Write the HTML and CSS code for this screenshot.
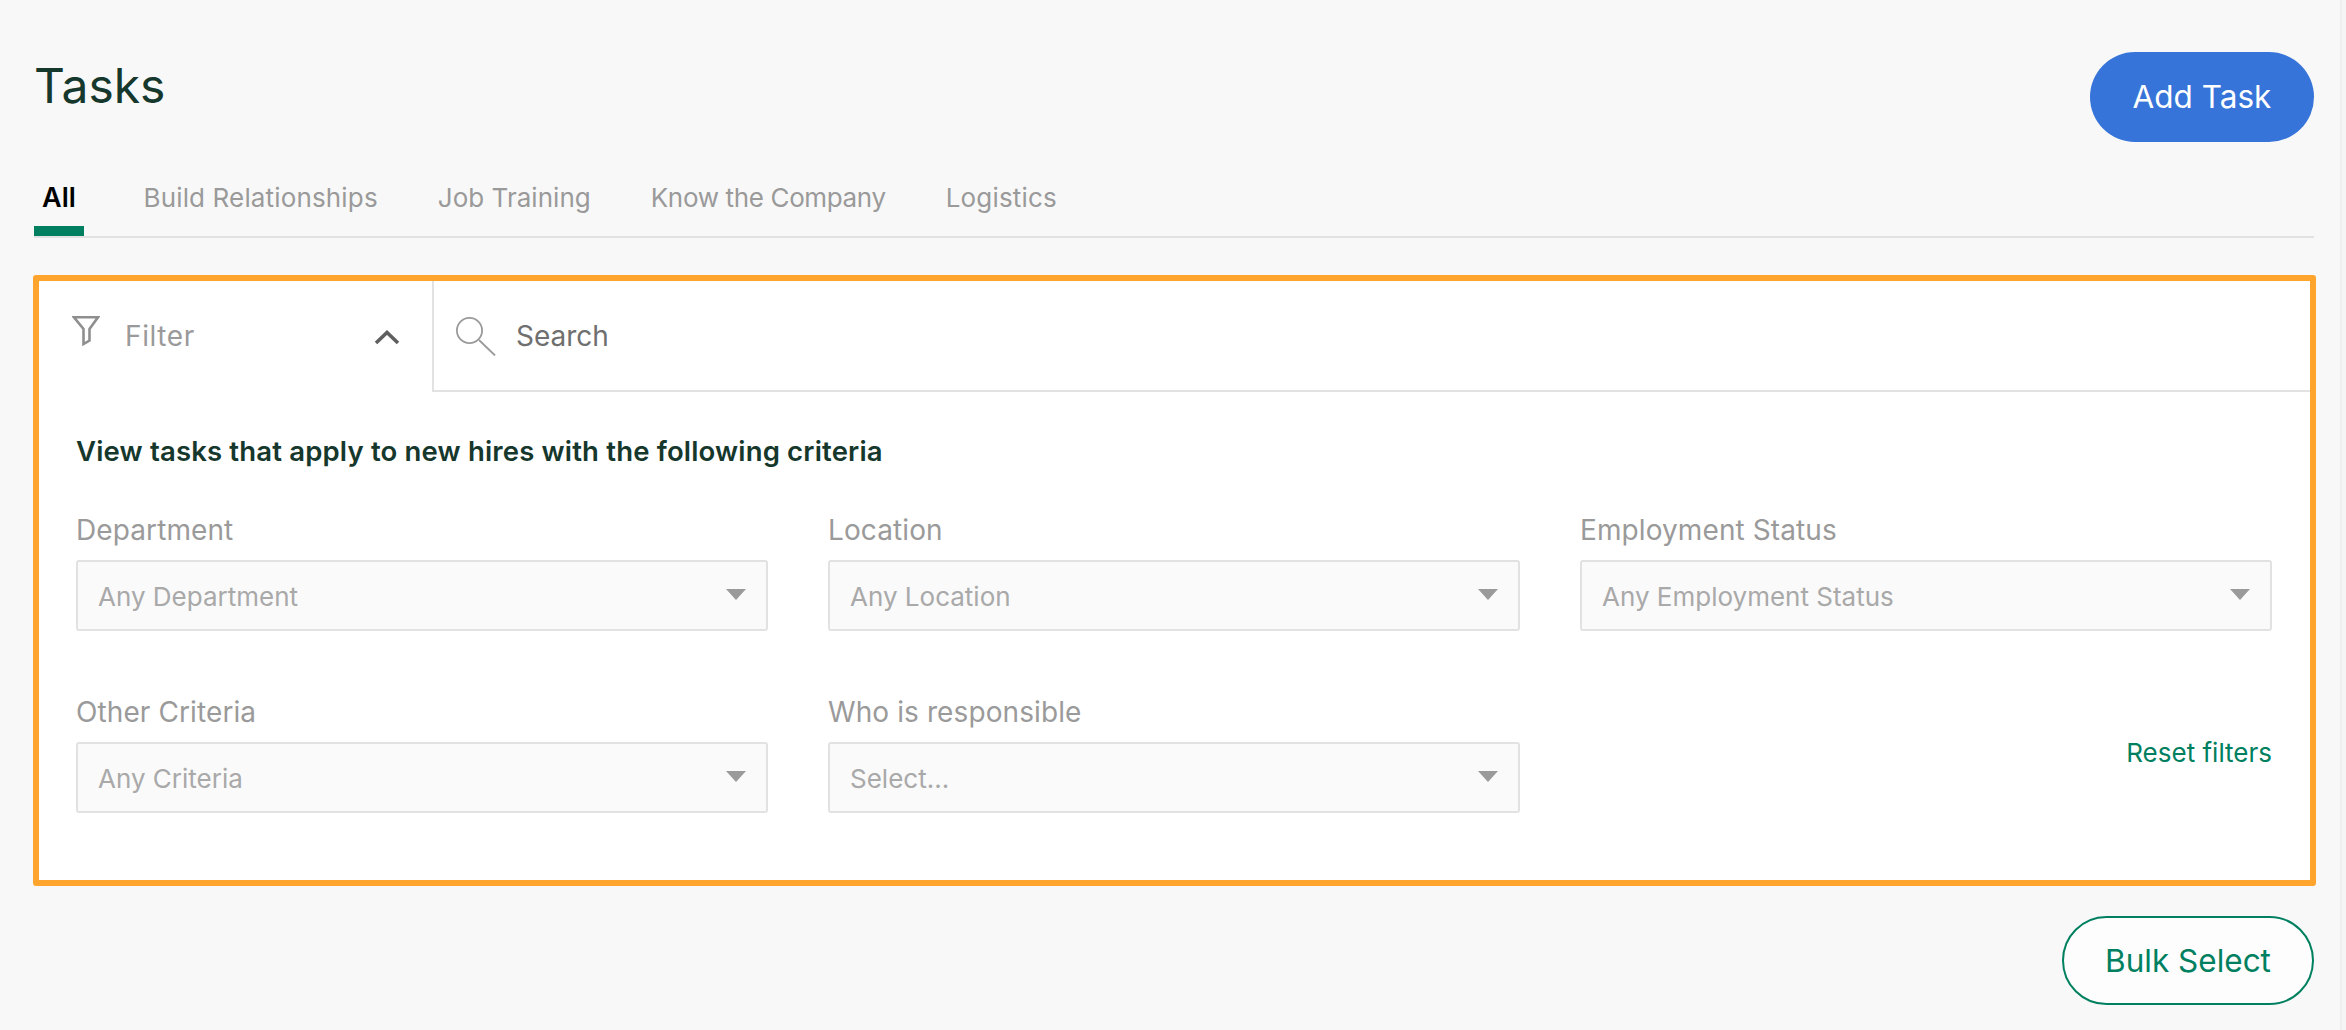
FILE: index.html
```html
<!DOCTYPE html>
<html lang="en">
<head>
<meta charset="utf-8">
<title>Tasks</title>
<link rel="stylesheet" href="styles.css">
</head>
<body>
<main class="page">
  <header class="header">
    <h1 class="title">Tasks</h1>
    <button class="btn btn-primary">Add Task</button>
  </header>
  <nav class="tabs">
    <a class="tab tab-active">All</a>
    <a class="tab">Build Relationships</a>
    <a class="tab tab-narrow">Job Training</a>
    <a class="tab tab-narrower">Know the Company</a>
    <a class="tab">Logistics</a>
  </nav>
  <section class="panel">
    <div class="toolbar">
      <div class="filter">
        <svg class="filter-icon" width="28" height="31" viewBox="0 0 28 31" fill="none" stroke="#8f8f8f" stroke-width="2.6"><path d="M2 2.3H26L17.5 14V25.5L11.5 29V14Z"/></svg>
        <span class="filter-label">Filter</span>
        <svg class="chevron" width="26" height="16" viewBox="0 0 26 16" fill="none" stroke="#5f5f5f" stroke-width="3.6"><path d="M2 14L13 3.5L24 14"/></svg>
      </div>
      <div class="search">
        <svg class="search-icon" width="40" height="39" viewBox="0 0 40 39" fill="none" stroke="#9a9a9a" stroke-width="1.8"><circle cx="13.5" cy="13.5" r="12.6"/><path d="M23 23L39 38.5"/></svg>
        <span class="search-label">Search</span>
      </div>
    </div>
    <div class="criteria">
      <h2 class="criteria-title">View tasks that apply to new hires with the following criteria</h2>
      <div class="grid">
        <div class="field">
          <label class="field-label">Department</label>
          <div class="select"><span>Any Department</span><i class="caret"></i></div>
        </div>
        <div class="field">
          <label class="field-label">Location</label>
          <div class="select"><span>Any Location</span><i class="caret"></i></div>
        </div>
        <div class="field">
          <label class="field-label">Employment Status</label>
          <div class="select"><span>Any Employment Status</span><i class="caret"></i></div>
        </div>
        <div class="field">
          <label class="field-label">Other Criteria</label>
          <div class="select"><span>Any Criteria</span><i class="caret"></i></div>
        </div>
        <div class="field">
          <label class="field-label">Who is responsible</label>
          <div class="select"><span>Select...</span><i class="caret"></i></div>
        </div>
        <div class="reset-cell"><a class="reset">Reset filters</a></div>
      </div>
    </div>
  </section>
  <div class="actions">
    <button class="btn btn-outline">Bulk Select</button>
  </div>
</main>
</body>
</html>
```
FILE: styles.css
```css
* { box-sizing: border-box; }
html, body { margin: 0; height: 100%; }
body {
  background: #f8f8f8;
  font-family: "Inter", "Liberation Sans", sans-serif;
  overflow: hidden;
}
body::after {
  content: "";
  position: fixed; top: 0; right: 0; bottom: 0;
  width: 4px;
  background: #f5f5f5;
  border-left: 2px solid #efefef;
}
.page { padding: 52px 32px 0 34px; }
.header { display: flex; justify-content: space-between; align-items: flex-start; height: 90px; }
.title { margin: 0; font-size: 48px; line-height: 68px; font-weight: 400; color: #15372c; }
.btn { font-family: inherit; border-radius: 45px; cursor: pointer; }
.btn-primary {
  width: 224px; height: 90px; border: 0; padding-bottom: 2px;
  background: #3674d9; color: #fff; font-size: 31.5px;
}
.tabs { display: flex; height: 96px; padding-top: 38px; border-bottom: 2px solid #e2e2e2; }
.tab {
  height: 56px; padding: 0 8px; margin-right: 44px;
  font-size: 26px; letter-spacing: 0.15px; line-height: 36px; color: #9a9a9a;
}
.tab-narrow { letter-spacing: 0.03px; }
.tab-narrower { letter-spacing: -0.35px; }
.tab-active { color: #000; font-weight: 600; font-size: 27px; letter-spacing: 0; border-bottom: 10px solid #008060; margin-right: 51.5px; min-width: 50px; }
.panel {
  margin: 37px -2px 0 -1px;
  height: 611px;
  border: 6px solid #ffa52e;
  border-radius: 3px;
  background: #fff;
}
.toolbar { display: flex; height: 111px; }
.filter { width: 393px; display: flex; align-items: flex-start; padding: 34px 32px 0 33px; }
.filter-icon { flex: none; }
.filter-label { margin: 3px 0 0 25px; font-size: 28px; letter-spacing: 0.6px; line-height: 36px; color: #9a9a9a; flex: 1; }
.chevron { flex: none; margin-top: 14px; }
.search {
  flex: 1; display: flex; align-items: flex-start;
  border-left: 2px solid #e2e2e2; border-bottom: 2px solid #e2e2e2;
  padding: 36px 0 0 22px;
}
.search-label { margin: 1px 0 0 20px; font-size: 28px; line-height: 36px; color: #6f6f6f; }
.criteria { padding: 41px 38px 0 37px; }
.criteria-title { margin: 0; font-size: 27.5px; letter-spacing: 0.17px; line-height: 36px; font-weight: 600; color: #15372c; }
.grid { display: grid; grid-template-columns: repeat(3, 692px); column-gap: 60px; row-gap: 38px; margin-top: 43px; }
.field { display: flex; flex-direction: column; height: 144px; }
.field-label { font-size: 28px; letter-spacing: 0.1px; line-height: 36px; color: #9a9a9a; margin-bottom: 12px; }
.select {
  height: 71px; display: flex; align-items: center; justify-content: space-between;
  padding: 2px 20px 0;
  background: #fafafa; border: 2px solid #e2e2e2; border-radius: 3px;
  font-size: 26px; color: #a9a9a9;
}
.caret { width: 0; height: 0; border-left: 10px solid transparent; border-right: 10px solid transparent; border-top: 11px solid #9a9a9a; margin-top: -5px; }
.reset-cell { display: flex; justify-content: flex-end; align-items: flex-start; padding-top: 41px; }
.reset { font-size: 26px; line-height: 36px; color: #008060; }
.actions { display: flex; justify-content: flex-end; margin-top: 30px; }
.btn-outline {
  width: 252px; height: 89px; padding-bottom: 2px;
  background: #fdfdfd; border: 2px solid #008060; color: #008060; font-size: 31.5px;
}
```
